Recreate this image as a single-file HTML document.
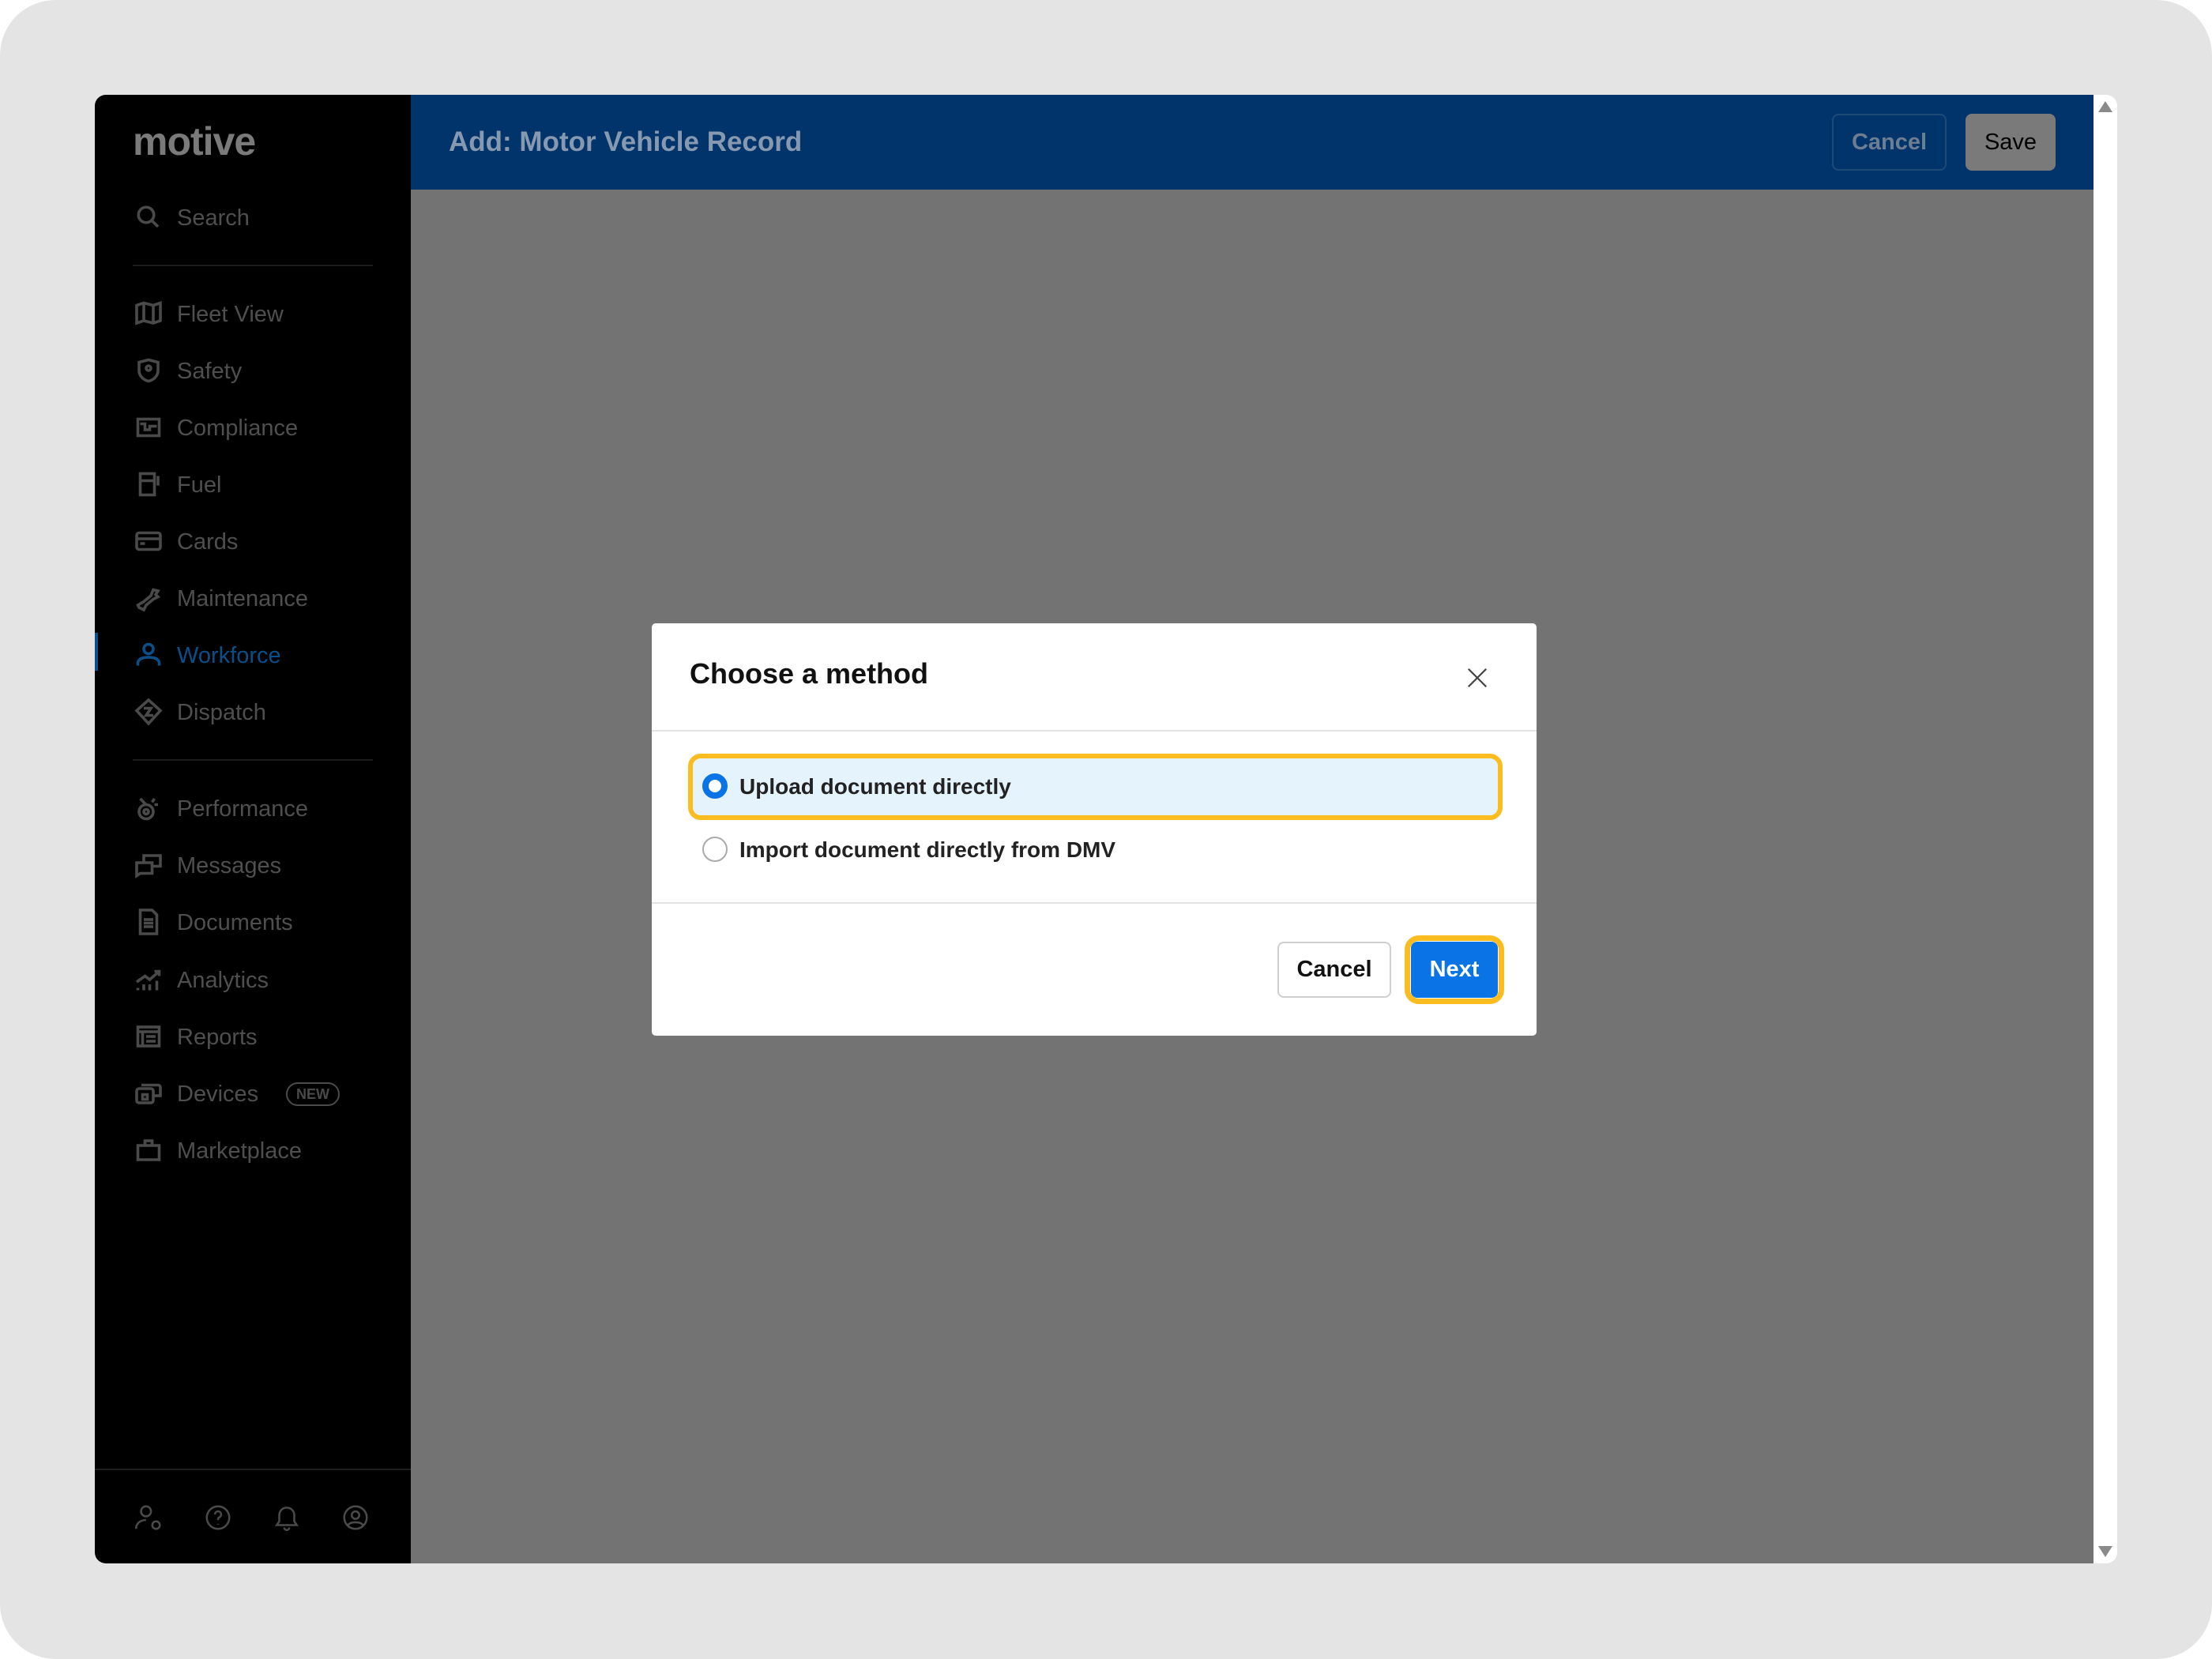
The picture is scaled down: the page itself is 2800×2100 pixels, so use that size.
<!DOCTYPE html>
<html><head><meta charset="utf-8"><style>
*{box-sizing:border-box;margin:0;padding:0}
body{width:2800px;height:2100px;background:#fff;font-family:"Liberation Sans",sans-serif;position:relative;overflow:hidden}
#bg{position:absolute;left:0;top:0;width:2800px;height:2100px;background:#e4e4e4;border-radius:70px}
.abs{position:absolute}
#side{left:120px;top:120px;width:400px;height:1859px;background:#000;border-radius:14px 0 0 14px}
.item{position:absolute;left:0;width:400px;height:60px}
.item svg{position:absolute;left:50px;top:12px;width:36px;height:36px;fill:none;stroke:#4a4a4a;stroke-width:2.4}
.item span{position:absolute;left:104px;top:13px;font-size:29px;color:#4f4f4f;line-height:36px}
.div{position:absolute;left:48px;width:304px;height:2px;background:#1c1c1c}
#main{left:520px;top:120px;width:2130px;height:1859px;background:#737373}
#hdr{left:520px;top:120px;width:2130px;height:120px;background:#00346a}
#scroll{left:2650px;top:120px;width:30px;height:1859px;background:#fff;border-radius:0 14px 14px 0}
.btn{position:absolute;font-weight:bold;font-size:29px;display:flex;align-items:center;justify-content:center;border-radius:8px}
</style></head><body>
<div id="bg"></div>
<div id="side" class="abs">
 <div class="abs" style="left:48px;top:30px;font-size:50px;font-weight:bold;color:#7a7a7a;letter-spacing:-1px">motive</div>
 <div class="item" style="top:125px"><svg viewBox="0 0 24 24"><circle cx="10" cy="10" r="6.5"/><path d="M15 15l5 5"/></svg><span>Search</span></div>
 <div class="div" style="top:215px"></div>
 <div class="item" style="top:247px"><svg viewBox="0 0 24 24"><path d="M2 5l6-2 8 2 6-2v15l-6 2-8-2-6 2z M8 3v15 M16 5v15"/></svg><span>Fleet View</span></div>
 <div class="item" style="top:319px"><svg viewBox="0 0 24 24"><path d="M4 5l8-2 8 2v7c0 5-4 8-8 9-4-1-8-4-8-9z"/><circle cx="12" cy="10" r="2"/></svg><span>Safety</span></div>
 <div class="item" style="top:391px"><svg viewBox="0 0 24 24"><rect x="3" y="5" width="18" height="14"/><path d="M5 9h4v5h4v-3h6"/></svg><span>Compliance</span></div>
 <div class="item" style="top:463px"><svg viewBox="0 0 24 24"><rect x="5" y="3" width="12" height="18"/><path d="M5 9h12 M20 5v8"/></svg><span>Fuel</span></div>
 <div class="item" style="top:535px"><svg viewBox="0 0 24 24"><rect x="2" y="5" width="20" height="14" rx="2"/><path d="M2 10h20 M5 14h4"/></svg><span>Cards</span></div>
 <div class="item" style="top:607px"><svg viewBox="0 0 24 24"><path d="M3 18l5-3 6-5 2-5 4 1-2 3 2 2-4 2-6 5-2 4-4-2z"/></svg><span>Maintenance</span></div>
 <div class="abs" style="left:0;top:681px;width:4px;height:48px;background:#0b4f8a"></div>
 <div class="item" style="top:679px"><svg viewBox="0 0 24 24" style="stroke:#0b4f8a"><circle cx="12" cy="7" r="4"/><path d="M3 21v-2c0-3 3-5 9-5s9 2 9 5v2"/></svg><span style="color:#0b4f8a">Workforce</span></div>
 <div class="item" style="top:751px"><svg viewBox="0 0 24 24"><path d="M12 2l10 9-10 11L2 11z"/><path d="M8 9h6l-4 6h6"/></svg><span>Dispatch</span></div>
 <div class="div" style="top:841px"></div>
 <div class="item" style="top:873px"><svg viewBox="0 0 24 24"><circle cx="10" cy="15" r="6"/><circle cx="10" cy="15" r="2"/><path d="M5 4l5 5 M17 4l-2 3 M20 9h-3"/></svg><span>Performance</span></div>
 <div class="item" style="top:945px"><svg viewBox="0 0 24 24"><path d="M2 10h13v9H5l-3 2z M8 10V4h14v9h-7"/></svg><span>Messages</span></div>
 <div class="item" style="top:1017px"><svg viewBox="0 0 24 24"><path d="M5 2h10l4 4v16H5z M8 10h8 M8 13h8 M8 16h8"/></svg><span>Documents</span></div>
 <div class="item" style="top:1090px"><svg viewBox="0 0 24 24"><path d="M2 14l7-5 4 3 8-7 M17 5h4v4 M3 21v-2 M8 21v-5 M13 21v-5 M19 21v-8"/></svg><span>Analytics</span></div>
 <div class="item" style="top:1162px"><svg viewBox="0 0 24 24"><rect x="3" y="4" width="18" height="16"/><path d="M3 8h18 M7 8v12 M10 12h8 M10 16h8"/></svg><span>Reports</span></div>
 <div class="item" style="top:1234px"><svg viewBox="0 0 24 24"><rect x="2" y="8" width="14" height="12" rx="2"/><path d="M6 5h14a2 2 0 0 1 2 2v7h-6"/><rect x="7" y="13" width="4" height="4"/></svg><span>Devices</span>
  <div class="abs" style="left:242px;top:16px;width:68px;height:30px;border:2px solid #4a4a4a;border-radius:16px;color:#4a4a4a;font-size:18px;font-weight:bold;text-align:center;line-height:26px">NEW</div></div>
 <div class="item" style="top:1306px"><svg viewBox="0 0 24 24"><path d="M3 8h18v12H3z M9 8V4h6v4"/></svg><span>Marketplace</span></div>
 <div class="abs" style="left:0;top:1739px;width:400px;height:2px;background:#1c1c1c"></div>
 <svg class="abs" style="left:49px;top:1782px;width:38px;height:38px" viewBox="0 0 24 24" fill="none" stroke="#4a4a4a" stroke-width="1.6"><circle cx="10" cy="7" r="4"/><path d="M2 21c0-4 3-7 8-7"/><circle cx="18" cy="18" r="3"/></svg>
 <svg class="abs" style="left:137px;top:1782px;width:38px;height:38px" viewBox="0 0 24 24" fill="none" stroke="#4a4a4a" stroke-width="1.6"><circle cx="12" cy="12" r="9"/><path d="M9.5 9.5a2.5 2.5 0 1 1 3.5 2.3c-1 .5-1 1-1 2.2 M12 17v.5"/></svg>
 <svg class="abs" style="left:224px;top:1782px;width:38px;height:38px" viewBox="0 0 24 24" fill="none" stroke="#4a4a4a" stroke-width="1.6"><path d="M4 18h16l-2-3v-5a6 6 0 0 0-12 0v5z M10 20a2 2 0 0 0 4 0"/></svg>
 <svg class="abs" style="left:311px;top:1782px;width:38px;height:38px" viewBox="0 0 24 24" fill="none" stroke="#4a4a4a" stroke-width="1.6"><circle cx="12" cy="12" r="9"/><circle cx="12" cy="10" r="3"/><path d="M6 18c2-3 10-3 12 0"/></svg>
</div>
<div id="main" class="abs"></div>
<div id="hdr" class="abs">
 <div class="abs" style="left:48px;top:40px;font-size:35px;font-weight:bold;color:#8799b0">Add: Motor Vehicle Record</div>
 <div class="btn" style="left:1799px;top:24px;width:145px;height:72px;border:2px solid #1e4a78;color:#6d7d92">Cancel</div>
 <div class="btn" style="left:1968px;top:24px;width:114px;height:72px;background:#7a7a7a;color:#000;font-weight:normal">Save</div>
</div>
<div id="scroll" class="abs">
 <div class="abs" style="left:6px;top:8px;width:0;height:0;border-left:9px solid transparent;border-right:9px solid transparent;border-bottom:14px solid #8a8a8a"></div>
 <div class="abs" style="left:6px;top:1837px;width:0;height:0;border-left:9px solid transparent;border-right:9px solid transparent;border-top:14px solid #8a8a8a"></div>
</div>
<div class="abs" style="left:825px;top:789px;width:1120px;height:522px;background:#fff;border-radius:5px">
 <div class="abs" style="left:48px;top:43px;font-size:36px;font-weight:bold;color:#111">Choose a method</div>
 <svg class="abs" style="left:1030px;top:54px;width:30px;height:30px" viewBox="0 0 24 24" stroke="#444" stroke-width="1.8"><path d="M3 3l18 18M21 3L3 21"/></svg>
 <div class="abs" style="left:0;top:135px;width:1120px;height:2px;background:#e2e2e2"></div>
 <div class="abs" style="left:46px;top:165px;width:1031px;height:84px;border:6px solid #fbbc1f;border-radius:16px;background:#e5f3fd"></div>
 <div class="abs" style="left:64px;top:190px;width:32px;height:32px;border-radius:50%;border:8px solid #0a74e6;background:#fff"></div>
 <div class="abs" style="left:111px;top:191px;font-size:28px;font-weight:bold;color:#222">Upload document directly</div>
 <div class="abs" style="left:64px;top:270px;width:32px;height:32px;border-radius:50%;border:2px solid #aaa;background:#fff"></div>
 <div class="abs" style="left:111px;top:271px;font-size:28px;font-weight:bold;color:#222">Import document directly from DMV</div>
 <div class="abs" style="left:0;top:353px;width:1120px;height:2px;background:#e2e2e2"></div>
 <div class="btn" style="left:792px;top:403px;width:144px;height:71px;border:2px solid #cfcfcf;color:#111">Cancel</div>
 <div class="abs" style="left:953px;top:395px;width:126px;height:87px;border:7px solid #fbbc1f;border-radius:18px"></div>
 <div class="btn" style="left:961px;top:403px;width:110px;height:71px;background:#0a74e6;color:#fff">Next</div>
</div>
</body></html>
